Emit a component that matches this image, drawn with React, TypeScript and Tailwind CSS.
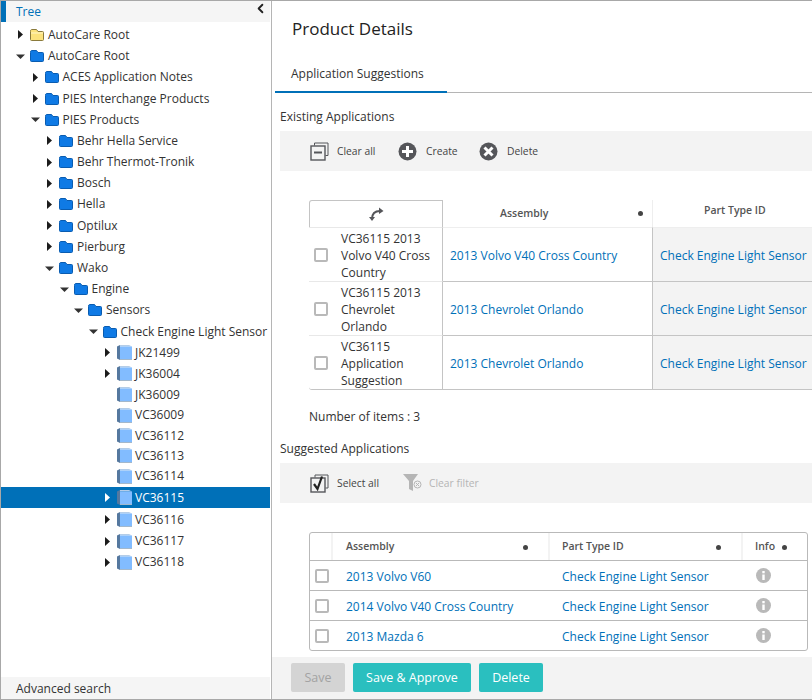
import { ChevronLeft } from "lucide-react";

type Node = { label: string; depth: number; kind: "yellow" | "folder" | "part"; arrow?: "right" | "down"; selected?: boolean };

const tree: Node[] = [
  { label: "AutoCare Root", depth: 0, kind: "yellow", arrow: "right" },
  { label: "AutoCare Root", depth: 0, kind: "folder", arrow: "down" },
  { label: "ACES Application Notes", depth: 1, kind: "folder", arrow: "right" },
  { label: "PIES Interchange Products", depth: 1, kind: "folder", arrow: "right" },
  { label: "PIES Products", depth: 1, kind: "folder", arrow: "down" },
  { label: "Behr Hella Service", depth: 2, kind: "folder", arrow: "right" },
  { label: "Behr Thermot-Tronik", depth: 2, kind: "folder", arrow: "right" },
  { label: "Bosch", depth: 2, kind: "folder", arrow: "right" },
  { label: "Hella", depth: 2, kind: "folder", arrow: "right" },
  { label: "Optilux", depth: 2, kind: "folder", arrow: "right" },
  { label: "Pierburg", depth: 2, kind: "folder", arrow: "right" },
  { label: "Wako", depth: 2, kind: "folder", arrow: "down" },
  { label: "Engine", depth: 3, kind: "folder", arrow: "down" },
  { label: "Sensors", depth: 4, kind: "folder", arrow: "down" },
  { label: "Check Engine Light Sensor", depth: 5, kind: "folder", arrow: "down" },
  { label: "JK21499", depth: 6, kind: "part", arrow: "right" },
  { label: "JK36004", depth: 6, kind: "part", arrow: "right" },
  { label: "JK36009", depth: 6, kind: "part" },
  { label: "VC36009", depth: 6, kind: "part" },
  { label: "VC36112", depth: 6, kind: "part" },
  { label: "VC36113", depth: 6, kind: "part" },
  { label: "VC36114", depth: 6, kind: "part" },
  { label: "VC36115", depth: 6, kind: "part", arrow: "right", selected: true },
  { label: "VC36116", depth: 6, kind: "part", arrow: "right" },
  { label: "VC36117", depth: 6, kind: "part", arrow: "right" },
  { label: "VC36118", depth: 6, kind: "part", arrow: "right" },
];

function FolderIcon({ yellow }: { yellow?: boolean }) {
  const fill = yellow ? "#fbe27c" : "#0f7ae5";
  const stroke = yellow ? "#8a7a3c" : "#0a5cb0";
  return (
    <svg width="14" height="12" viewBox="0 0 14 12" className="shrink-0">
      <path d="M0.5 2.5 V10.5 a1 1 0 0 0 1 1 H12.5 a1 1 0 0 0 1 -1 V3.5 a1 1 0 0 0 -1 -1 H8 L6.5 0.5 H2 a1.5 1.5 0 0 0 -1.5 2 Z" fill={fill} stroke={stroke} />
      {yellow && <path d="M1 4 H13" stroke="#fff6c8" />}
    </svg>
  );
}

function PartIcon() {
  return (
    <svg width="15" height="15" viewBox="0 0 15 15" className="shrink-0">
      <path d="M0 1.5 L3 0 V15 L0 13.5 Z" fill="#55789f" />
      <path d="M3 0 H12 L15 1.5 H3 Z" fill="#b4cde8" />
      <rect x="3" y="1.5" width="12" height="12.5" fill="#82bcff" />
      <rect x="3" y="14" width="12" height="1" fill="#a3b8cc" />
    </svg>
  );
}

function Arrow({ dir, light }: { dir: "right" | "down"; light?: boolean }) {
  return (
    <svg width="9" height="9" viewBox="0 0 9 9" className="shrink-0">
      {dir === "right" ? (
        <path d="M2 0 L7 4.5 L2 9 Z" fill={light ? "#ffffff" : "#1c1c1c"} />
      ) : (
        <path d="M0 2.5 H9 L4.5 7 Z" fill="#333333" />
      )}
    </svg>
  );
}

function ClearAllIcon() {
  return (
    <svg width="19" height="19" viewBox="0 0 19 19" fill="none" stroke="#55565a">
      <path d="M4.5 3.5 V1 H18 V13.5 H15.5" strokeWidth="1" />
      <rect x="1" y="4" width="14" height="14" strokeWidth="1.4" fill="#f3f3f3" />
      <path d="M4 10.5 H12" strokeWidth="2" />
    </svg>
  );
}

function CircleIcon({ kind }: { kind: "plus" | "x" }) {
  return (
    <svg width="19" height="19" viewBox="0 0 19 19">
      <circle cx="9.5" cy="9.5" r="9" fill="#55565a" />
      {kind === "plus" ? (
        <path d="M9.5 4 V15 M4 9.5 H15" stroke="#ffffff" strokeWidth="3" />
      ) : (
        <path d="M5.5 5.5 L13.5 13.5 M13.5 5.5 L5.5 13.5" stroke="#ffffff" strokeWidth="3" />
      )}
    </svg>
  );
}

function SelectAllIcon() {
  return (
    <svg width="20" height="19" viewBox="0 0 20 19" fill="none" stroke="#55565a">
      <path d="M5 3.5 V1 H18 V14 H15.5" strokeWidth="1" />
      <rect x="1" y="4" width="14" height="14" strokeWidth="1.4" fill="#f3f3f3" />
      <path d="M4 10 L7.5 15 L12 2.5" stroke="#222222" strokeWidth="2.2" />
    </svg>
  );
}

function ClearFilterIcon() {
  return (
    <svg width="19" height="18" viewBox="0 0 19 18">
      <path d="M0 0 H15 L10 7 V17 L6 15 V7 Z" fill="#b5b5b5" />
      <circle cx="14.5" cy="10.5" r="3.5" fill="#f3f3f3" stroke="#b5b5b5" />
      <path d="M13 9 L16 12 M16 9 L13 12" stroke="#b5b5b5" />
    </svg>
  );
}

function SwapIcon() {
  return (
    <svg width="15" height="14" viewBox="0 0 15 14" fill="none">
      <path d="M3 12 C3 6 6 4 11 4" stroke="#55565a" strokeWidth="2" />
      <path d="M10 0.5 L14.5 4 L10 7 Z" fill="#55565a" />
      <path d="M0 10 H6 L3 14 Z" fill="#55565a" />
    </svg>
  );
}

function InfoIcon() {
  return (
    <svg width="15" height="15" viewBox="0 0 15 15">
      <circle cx="7.5" cy="7.5" r="7.5" fill="#b9b9b9" />
      <rect x="6.3" y="6.5" width="2.4" height="5.5" fill="#ffffff" />
      <rect x="6.3" y="3" width="2.4" height="2.3" fill="#ffffff" />
    </svg>
  );
}

function Dot() {
  return <span className="w-[5px] h-[5px] rounded-full bg-[#444444] shrink-0" />;
}

function Check() {
  return <span className="block w-[14px] h-[14px] border-2 border-[#b9b9b9] rounded-[2px] bg-white shrink-0" />;
}

function ToolItem({ icon, label, muted, className }: { icon: React.ReactNode; label: string; muted?: boolean; className: string }) {
  return (
    <div className={`flex items-center ${className}`}>
      {icon}
      <span className={`text-[10.3px] pt-[2px] ${muted ? "text-[#b5b5b5]" : "text-[#444444]"}`}>{label}</span>
    </div>
  );
}

const existing = [
  { name: ["VC36115 2013", "Volvo V40 Cross", "Country"], assembly: "2013 Volvo V40 Cross Country" },
  { name: ["VC36115 2013", "Chevrolet", "Orlando"], assembly: "2013 Chevrolet Orlando" },
  { name: ["VC36115", "Application", "Suggestion"], assembly: "2013 Chevrolet Orlando" },
];

const suggested = ["2013 Volvo V60", "2014 Volvo V40 Cross Country", "2013 Mazda 6"];

export default function App() {
  return (
    <div className="w-[812px] h-[700px] flex overflow-hidden bg-white border-t border-l border-b border-[#a8a8a8] text-[12px] text-[#333333] font-['Open_Sans',sans-serif]">
      {/* Tree panel */}
      <aside className="w-[271px] shrink-0 flex flex-col border-r border-[#b5b5b5] relative">
        <div className="h-[21px] flex items-center bg-[#f5f5f5] border-l-[5px] border-[#0070b8] pl-[10px] mr-[1px] text-[#0070b8] shrink-0">
          Tree
        </div>
        <ChevronLeft className="absolute right-[3px] top-0 w-[15px] h-[15px] text-[#222222]" strokeWidth={3} />
        <div className="pt-[2.4px] pr-[1px] flex-1">
          {tree.map((n, i) => (
            <div
              key={i}
              className={`flex items-center ${n.arrow ? "h-[21.2px]" : "h-[20.4px]"} ${n.selected ? "bg-[#0070b8] text-white mb-[1.5px]" : ""}`}
              style={{ paddingLeft: 15 + n.depth * 14.5 }}
            >
              <span className="w-[9px] flex justify-center shrink-0">{n.arrow && <Arrow dir={n.arrow} light={n.selected} />}</span>
              <span className="w-[5px] shrink-0" />
              <span className="w-[17px] shrink-0 flex items-center">
                {n.kind === "part" ? <PartIcon /> : <FolderIcon yellow={n.kind === "yellow"} />}
              </span>
              <span className={`ml-[1px] whitespace-nowrap ${n.selected ? "pt-[1px]" : ""}`}>{n.label}</span>
            </div>
          ))}
        </div>
        <div className="h-[22px] flex items-center pl-[15px] pt-[1px] mr-[1px] bg-[#f5f5f5] shrink-0">Advanced search</div>
      </aside>

      {/* Details panel */}
      <main className="flex-1 min-w-0 flex flex-col">
        <div className="flex-1 min-h-0 overflow-hidden">
          <h1 className="h-[56px] pt-[15px] pl-[20px] text-[17px] leading-[26px] text-[#222222]">Product Details</h1>
          <div className="flex h-[36px] border-b border-[#b5b5b5] ml-[3px]">
            <div className="w-[172px] h-[36px] pl-[16px] pt-[8px] border-b-2 border-[#0070b8] leading-[18px]">
              Application Suggestions
            </div>
          </div>

          <div className="pl-[8px] pt-[15px] pb-[5px] leading-[18px]">Existing Applications</div>
          <div className="ml-[8px] h-[40px] bg-[#f3f3f3] flex items-center pl-[30px]">
            <ToolItem className="w-[88px] gap-[8px]" icon={<ClearAllIcon />} label="Clear all" />
            <ToolItem className="w-[81px] gap-[9px]" icon={<CircleIcon kind="plus" />} label="Create" />
            <ToolItem className="gap-[9px]" icon={<CircleIcon kind="x" />} label="Delete" />
          </div>

          <div className="ml-[37px] mt-[29px] overflow-hidden">
            <div className="flex h-[27px] w-[503px]">
              <div className="w-[134px] shrink-0 flex items-center justify-center border border-b-0 border-[#c4c4c4] rounded-tl-[3px]">
                <SwapIcon />
              </div>
              <div className="w-[210px] shrink-0 flex items-center border-r border-[#eeeeee] pr-[9px] pl-[57px]">
                <span className="flex-1 text-[10.5px] font-semibold text-[#555555]">Assembly</span>
                <Dot />
              </div>
              <div className="flex-1 pl-[51px] pt-[3px] text-[10.5px] font-semibold text-[#555555]">Part Type ID</div>
            </div>
            {existing.map((r, i) => (
              <div key={i} className="flex h-[54px] last:h-[55px] w-[503px] last:border-b border-[#c4c4c4] last:rounded-bl-[3px]">
                <div className="w-[134px] shrink-0 flex items-center pl-[5px] border-t border-r border-t-[#e8e8e8] border-r-[#c4c4c4]">
                  <Check />
                  <div className="ml-[13px] pt-[1px] leading-[17px] whitespace-nowrap">
                    {r.name.map((l) => (
                      <div key={l}>{l}</div>
                    ))}
                  </div>
                </div>
                <div className={`w-[210px] shrink-0 flex items-center pl-[7px] pt-[2px] border-t border-r border-r-[#c4c4c4] text-[#0070b8] ${i === 0 ? "border-t-[#eeeeee]" : "border-t-[#c4c4c4]"}`}>
                  {r.assembly}
                </div>
                <div className={`flex-1 flex items-center pl-[7px] pt-[2px] border-t bg-[#f3f3f3] text-[#0070b8] whitespace-nowrap ${i === 0 ? "border-t-[#eeeeee]" : "border-t-[#c4c4c4]"}`}>
                  Check Engine Light Sensor
                </div>
              </div>
            ))}
          </div>

          <div className="ml-[37px] mt-[18px] leading-[18px]">Number of items : 3</div>
          <div className="pl-[8px] mt-[14px] pb-[5px] leading-[18px]">Suggested Applications</div>
          <div className="ml-[8px] h-[40px] bg-[#f3f3f3] flex items-center pl-[30px]">
            <ToolItem className="w-[93px] gap-[7px]" icon={<SelectAllIcon />} label="Select all" />
            <ToolItem className="gap-[7px]" icon={<ClearFilterIcon />} label="Clear filter" muted />
          </div>

          <div className="ml-[37px] mt-[29px] w-[499px] border border-[#b9b9b9] rounded-[3px]">
            <div className="flex h-[27px] items-center text-[10.5px] font-semibold text-[#555555]">
              <div className="w-[23px] h-full border-r-2 border-[#f3f3f3]" />
              <div className="w-[217px] h-full flex items-center pl-[13px] pr-[20px] pt-[1px] border-r-2 border-[#f3f3f3]">
                <span className="flex-1">Assembly</span>
                <Dot />
              </div>
              <div className="w-[193px] h-full flex items-center pl-[12px] pr-[20px] pt-[1px] border-r-2 border-[#f3f3f3]">
                <span className="flex-1">Part Type ID</span>
                <Dot />
              </div>
              <div className="flex-1 h-full flex items-center gap-[7px] pl-[12px] pt-[1px]">
                <span>Info</span>
                <Dot />
              </div>
            </div>
            {suggested.map((s) => (
              <div key={s} className="flex h-[30px] items-center border-t border-[#b9b9b9]">
                <div className="w-[23px] flex justify-center pl-[1px]">
                  <Check />
                </div>
                <div className="w-[217px] pl-[13px] pt-[2px] text-[#0070b8]">{s}</div>
                <div className="w-[193px] pl-[12px] pt-[2px] text-[#0070b8] whitespace-nowrap">Check Engine Light Sensor</div>
                <div className="pl-[13px] flex items-center">
                  <InfoIcon />
                </div>
              </div>
            ))}
          </div>
        </div>

        <div className="h-[42px] shrink-0 bg-[#f3f3f3] flex items-center gap-[8px] pl-[19px] pb-[1px] text-[12.5px]">
          <button className="w-[54px] h-[29px] pt-[1px] rounded-[2px] bg-[#d4d4d4] text-[#a3a3a3]">Save</button>
          <button className="w-[118px] h-[29px] pt-[1px] rounded-[2px] bg-[#2abfbf] text-white">Save &amp; Approve</button>
          <button className="w-[64px] h-[29px] pt-[1px] rounded-[2px] bg-[#2abfbf] text-white">Delete</button>
        </div>
      </main>
    </div>
  );
}
